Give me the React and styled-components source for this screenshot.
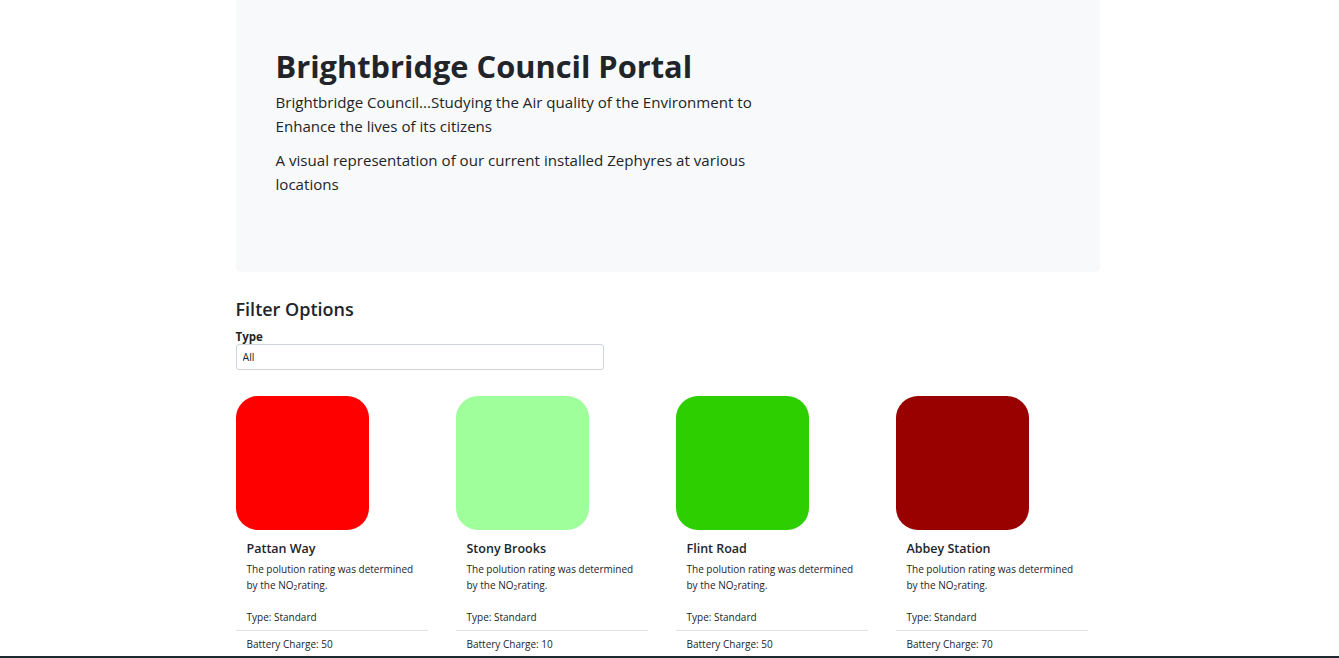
import styled, { createGlobalStyle } from "styled-components";

const GlobalStyle = createGlobalStyle`
  body {
    margin: 0;
    font-family: "Open Sans", "Noto Sans", sans-serif;
    color: #212529;
    background: #fff;
  }
  * { box-sizing: border-box; }
`;

const Page = styled.div`
  width: 864px;
  margin: 0 auto;
  padding-bottom: 40px;
  position: relative;
  left: -2px;
`;

const Jumbotron = styled.header`
  background: #f8f9fa;
  border-radius: 0 0 5px 5px;
  padding: 48px 40px 0;
  height: 272px;
`;

const Title = styled.h1`
  margin: 0 0 5px;
  font-size: 30.8px;
  font-weight: 700;
  line-height: 1.2;
`;

const Lead = styled.p`
  margin: 0 0 10px;
  max-width: 510px;
  font-size: 15.1px;
  line-height: 24px;
`;

const Filters = styled.section`
  margin-top: 25px;
`;

const FilterTitle = styled.h2`
  margin: 0 0 9px;
  font-size: 18px;
  font-weight: 600;
  line-height: 24px;
`;

const Label = styled.label`
  display: block;
  font-size: 11.5px;
  font-weight: 700;
  line-height: 14px;
`;

const Select = styled.select`
  display: block;
  width: 368px;
  height: 26px;
  padding: 0 6px;
  font-family: inherit;
  font-size: 10.5px;
  color: #212529;
  background: #fff;
  border: 1px solid #ced4da;
  border-radius: 3px;
  appearance: none;
`;

const Grid = styled.div`
  display: grid;
  grid-template-columns: repeat(4, 192px);
  column-gap: 28px;
  margin-top: 26px;
`;

const Card = styled.article`
  display: flex;
  flex-direction: column;
`;

const Swatch = styled.div`
  width: 133px;
  height: 134px;
  border-radius: 22px;
  background: ${(p) => p.$color};
`;

const CardBody = styled.div`
  padding: 10px 6px 0 11px;
`;

const CardTitle = styled.h3`
  margin: 0 0 3px;
  font-size: 12.5px;
  font-weight: 600;
  line-height: 18px;
`;

const CardText = styled.p`
  margin: 0;
  font-size: 10px;
  line-height: 16px;

  sub {
    font-size: 7px;
    vertical-align: -1px;
    line-height: 0;
  }
`;

const ListItem = styled.div`
  padding: 0 11px;
  font-size: 10px;
  line-height: 26px;
  border-top: ${(p) => (p.$divider ? "1px solid #dee2e6" : "none")};
`;

const TypeItem = styled(ListItem)`
  margin-top: 11px;
`;

const Taskbar = styled.div`
  position: fixed;
  left: 0;
  right: 0;
  bottom: 0;
  height: 2px;
  background: #1f2a30;
`;

const zephyrs = [
  { name: "Pattan Way", color: "#ff0000", battery: 50 },
  { name: "Stony Brooks", color: "#9eff9b", battery: 10 },
  { name: "Flint Road", color: "#2ecf00", battery: 50 },
  { name: "Abbey Station", color: "#990000", battery: 70 },
];

export default function App() {
  return (
    <>
      <GlobalStyle />
      <Page>
        <Jumbotron>
          <Title>Brightbridge Council Portal</Title>
          <Lead>
            Brightbridge Council...Studying the Air quality of the Environment
            to Enhance the lives of its citizens
          </Lead>
          <Lead>
            A visual representation of our current installed Zephyres at
            various locations
          </Lead>
        </Jumbotron>

        <Filters>
          <FilterTitle>Filter Options</FilterTitle>
          <Label htmlFor="type">Type</Label>
          <Select id="type" defaultValue="All">
            <option>All</option>
            <option>Standard</option>
          </Select>
        </Filters>

        <Grid>
          {zephyrs.map((z) => (
            <Card key={z.name}>
              <Swatch $color={z.color} />
              <CardBody>
                <CardTitle>{z.name}</CardTitle>
                <CardText>
                  The polution rating was determined by the NO<sub>2</sub>rating.
                </CardText>
              </CardBody>
              <TypeItem>Type: Standard</TypeItem>
              <ListItem $divider>Battery Charge: {z.battery}</ListItem>
            </Card>
          ))}
        </Grid>
      </Page>
      <Taskbar />
    </>
  );
}
